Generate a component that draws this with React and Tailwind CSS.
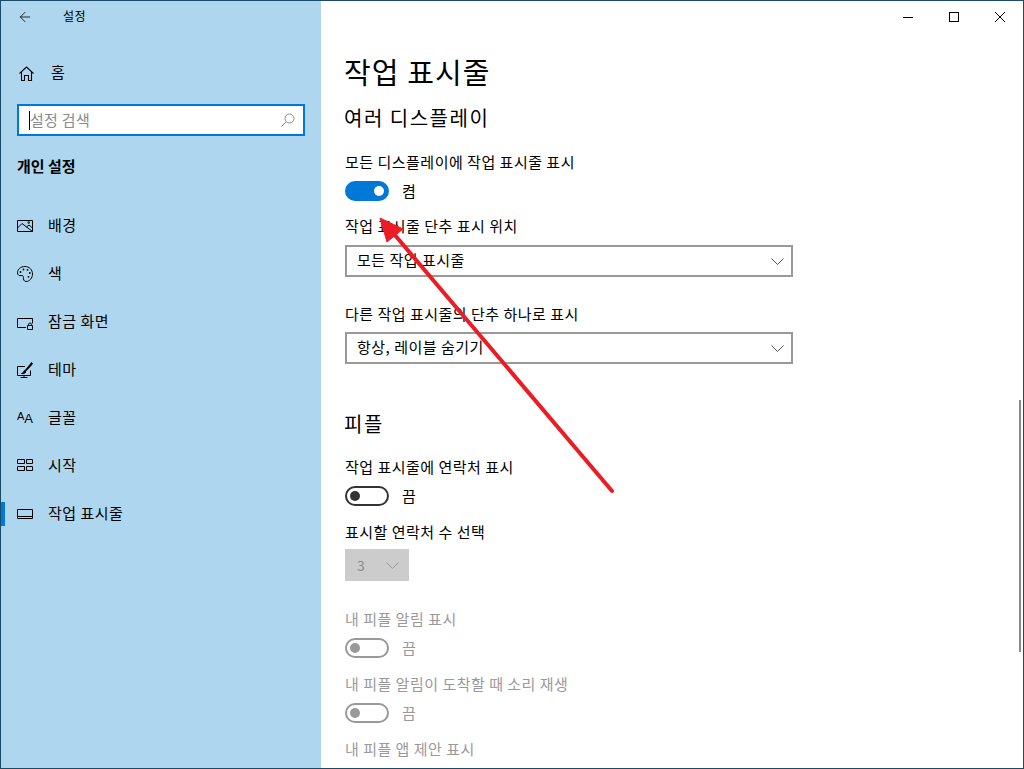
import React from "react";
import { ArrowLeft } from "lucide-react";

const FONT = "font-['Noto_Sans_CJK_KR','Noto_Sans',sans-serif]";

function NavIcon({ children }) {
  return (
    <svg width="16" height="16" viewBox="0 0 16 16" fill="none" stroke="#000" strokeWidth="1" className="shrink-0">
      {children}
    </svg>
  );
}

function Chevron({ color }) {
  return (
    <svg width="13" height="7" viewBox="0 0 13 7" fill="none" stroke={color} strokeWidth="1" className="shrink-0">
      <path d="M.5.5l6 6 6-6" />
    </svg>
  );
}

const navItems = [
  {
    label: "배경",
    icon: (
      <NavIcon>
        <path d="M.5 2.500h15v11H.5z" />
        <path d="M.5 10L5 5.500l10.500 8" />
        <path d="M9.500 9l2.500-2 3.500 3" />
        <path d="M11 3.800h1.400v1.400H11z" strokeWidth="0.8" />
      </NavIcon>
    ),
  },
  {
    label: "색",
    icon: (
      <NavIcon>
        <path d="M8 .5C3.600.5.5 3.200.5 6.800c0 2.300 1.900 3.200 3.600 2.800 1.600-.4 2.500.6 2.300 1.900-.2 1.800.6 4 2.700 4 3.400 0 6.400-3.500 6.400-7.500C15.500 3.800 12.300.5 8 .5z" />
        <circle cx="3.500" cy="6" r="0.9" fill="#000" stroke="none" />
        <circle cx="6.500" cy="3.500" r="0.9" fill="#000" stroke="none" />
        <circle cx="10.500" cy="3.800" r="0.9" fill="#000" stroke="none" />
        <circle cx="12.800" cy="7" r="0.9" fill="#000" stroke="none" />
        <circle cx="11.500" cy="10.800" r="0.9" fill="#000" stroke="none" />
      </NavIcon>
    ),
  },
  {
    label: "잠금 화면",
    icon: (
      <NavIcon>
        <path d="M9 13.500H.5v-9h15v5" />
        <path d="M10.500 11.500h5v4h-5z" />
        <path d="M11.500 11.500v-1a1.500 1.500 0 0 1 3 0v1" />
      </NavIcon>
    ),
  },
  {
    label: "테마",
    icon: (
      <NavIcon>
        <path d="M8 4.500H.5v9h13V8.500" />
        <path d="M7 13.500v2M3.500 15.500h7" />
        <path d="M4.500 11.500c1.300-.2 1.800-.8 2-1.800l1-1.200 1.500 1.500-1.200 1c-1 .7-2.100.8-3.300.5z" fill="#000" />
        <path d="M8 8.500L13.500 2l1-1.500 1 1-1 1.500-5.500 6" fill="#000" />
      </NavIcon>
    ),
  },
  {
    label: "글꼴",
    icon: (
      <div className="w-[16px] h-[16px] flex items-end justify-center font-['Liberation_Sans',sans-serif] text-black leading-none">
        <span className="text-[11px] relative -top-[4px]">A</span>
        <span className="text-[13px] relative -top-[1px]">A</span>
      </div>
    ),
  },
  {
    label: "시작",
    icon: (
      <NavIcon>
        <path d="M.5 1.500h7v4h-7zM9.500 1.500h6v4h-6zM.5 8.500h7v4h-7zM9.500 8.500h6v4h-6z" />
      </NavIcon>
    ),
  },
  {
    label: "작업 표시줄",
    active: true,
    icon: (
      <NavIcon>
        <path d="M.5 3.500h15v9H.5z" />
        <path d="M.5 10.500h15" />
      </NavIcon>
    ),
  },
];

function Sidebar() {
  return (
    <aside className="w-[320px] shrink-0 bg-[#aed6ee] flex flex-col text-black">
      <div className="h-[31px] flex items-center pl-[16px]">
        <ArrowLeft size={16} strokeWidth={1.2} />
        <span className="ml-[30px] text-[12px] leading-[16px] tracking-[0.4px] relative -top-px">설정</span>
      </div>
      <div className="h-[48px] mt-[17px] flex items-center pl-[18px]">
        <svg width="15" height="15" viewBox="0 0 15 15" fill="none" stroke="#000" strokeWidth="1.1">
          <path d="M.5 7.500L7.500 1l7 6.500M2.500 6v8.500h3V9.500h4v5h3V6" />
        </svg>
        <span className="ml-[17px] text-[15px] relative -top-px">홈</span>
      </div>
      <div className="mt-[7px] mx-[16px] h-[32px] w-[288px] border-2 border-[#0078d7] bg-white flex items-center pl-[10px] pr-[8px]">
        <span className="w-px h-[19px] bg-black shrink-0"></span>
        <span className="flex-1 text-[15px] tracking-[0.3px] text-[#8a8a8a]">설정 검색</span>
        <svg width="14" height="14" viewBox="0 0 14 14" fill="none" stroke="#8a8a8a" strokeWidth="1">
          <circle cx="8.500" cy="5.500" r="4.500" />
          <path d="M5.300 8.700L.5 13.500" />
        </svg>
      </div>
      <div className="mt-[16px] pl-[16px] h-[28px] leading-[28px] text-[15px] font-bold">개인 설정</div>
      <nav className="mt-[22px] flex flex-col">
        {navItems.map((item) => (
          <div key={item.label} className="relative h-[48px] flex items-center pl-[16px]">
            {item.active && <span className="absolute left-0 top-[12px] w-[4px] h-[24px] bg-[#0078d7]"></span>}
            {item.icon}
            <span className="ml-[15px] text-[15px] tracking-[0.5px] relative -top-px">{item.label}</span>
          </div>
        ))}
      </nav>
    </aside>
  );
}

function Label({ children, className = "", muted }) {
  return (
    <div className={`h-[20px] leading-[20px] text-[15px] tracking-[0.5px] ${muted ? "text-[#999]" : "text-black"} ${className}`}>
      {children}
    </div>
  );
}

function Toggle({ on, muted, text, className = "" }) {
  return (
    <div className={`flex items-center h-[20px] ${className}`}>
      {on ? (
        <div className="w-[44px] h-[20px] rounded-full bg-[#0078d7] flex items-center justify-end pr-[5px]">
          <span className="w-[10px] h-[10px] rounded-full bg-white"></span>
        </div>
      ) : (
        <div className={`w-[44px] h-[20px] rounded-full border-2 flex items-center pl-[3px] ${muted ? "border-[#999]" : "border-[#333]"}`}>
          <span className={`w-[10px] h-[10px] rounded-full ${muted ? "bg-[#999]" : "bg-[#333]"}`}></span>
        </div>
      )}
      <span className={`ml-[13px] text-[15px] ${muted ? "text-[#999]" : "text-black"}`}>{text}</span>
    </div>
  );
}

function Select({ value, className = "" }) {
  return (
    <div className={`w-[448px] h-[32px] border-2 border-[#999] bg-white flex items-center pl-[10px] pr-[7px] ${className}`}>
      <span className="flex-1 text-[15px] tracking-[0.5px] text-black relative -top-px">{value}</span>
      <Chevron color="#555" />
    </div>
  );
}

function WindowControls() {
  return (
    <div className="absolute top-0 right-0 flex text-black">
      <div className="w-[46px] h-[32px] flex items-center justify-center">
        <span className="w-[10px] h-px bg-black"></span>
      </div>
      <div className="w-[46px] h-[32px] flex items-center justify-center">
        <span className="w-[10px] h-[10px] border border-black"></span>
      </div>
      <div className="w-[46px] h-[32px] flex items-center justify-center">
        <svg width="10" height="10" viewBox="0 0 10 10" stroke="#000" strokeWidth="1">
          <path d="M0 0l10 10M10 0L0 10" />
        </svg>
      </div>
    </div>
  );
}

export default function App() {
  return (
    <div className={`relative w-[1024px] h-[769px] border border-[#1c4a66] bg-white flex overflow-hidden ${FONT}`}>
      <Sidebar />
      <main className="relative flex-1 pl-[24px] pt-[50px]">
        <WindowControls />
        <h1 className="h-[40px] leading-[40px] text-[29px] tracking-[1.1px] -ml-px text-black">작업 표시줄</h1>
        <h2 className="mt-[13px] h-[28px] leading-[28px] text-[20px] tracking-[1.5px] -ml-px text-black">여러 디스플레이</h2>
        <Label className="mt-[20px]">모든 디스플레이에 작업 표시줄 표시</Label>
        <Toggle on text="켬" className="mt-[9px]" />
        <Label className="mt-[15px]">작업 표시줄 단추 표시 위치</Label>
        <Select value="모든 작업 표시줄" className="mt-[9px]" />
        <Label className="mt-[27px]">다른 작업 표시줄의 단추 하나로 표시</Label>
        <Select value="항상, 레이블 숨기기" className="mt-[8px]" />
        <h2 className="mt-[46px] h-[28px] leading-[28px] text-[20px] tracking-[1.5px] -ml-px text-black">피플</h2>
        <Label className="mt-[19px]">작업 표시줄에 연락처 표시</Label>
        <Toggle text="끔" className="mt-[9px]" />
        <Label className="mt-[16px]">표시할 연락처 수 선택</Label>
        <div className="mt-[7px] w-[64px] h-[32px] bg-[#ccc] flex items-center pl-[12px] pr-[10px]">
          <span className="flex-1 text-[14px] text-[#8a8a8a]">3</span>
          <Chevron color="#999" />
        </div>
        <Label muted className="mt-[28px]">내 피플 알림 표시</Label>
        <Toggle muted text="끔" className="mt-[9px]" />
        <Label muted className="mt-[16px]">내 피플 알림이 도착할 때 소리 재생</Label>
        <Toggle muted text="끔" className="mt-[9px]" />
        <Label muted className="mt-[16px]">내 피플 앱 제안 표시</Label>
        {/* scrollbar thumb */}
        <span className="absolute right-[2px] top-[399px] w-[2px] h-[252px] bg-[#8a8a8a]"></span>
      </main>
      {/* red annotation arrow pasted on top of the window */}
      <svg className="absolute left-[-1px] top-[-1px] pointer-events-none" width="1024" height="769" viewBox="0 0 1024 769" fill="none">
        <path d="M612 491L394 234" stroke="#ed1c24" strokeWidth="4" strokeLinecap="round" />
        <path d="M380 218L387 242L403 229Z" fill="#ed1c24" stroke="#ed1c24" strokeWidth="1" />
      </svg>
    </div>
  );
}
